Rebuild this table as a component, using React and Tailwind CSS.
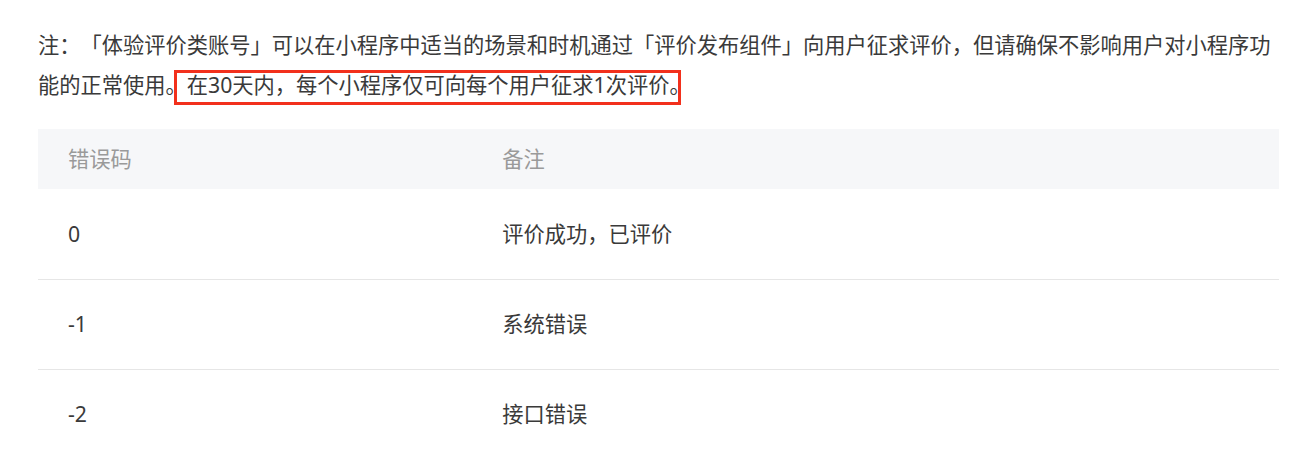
export default function App() {
  const rows = [
    ["0", "评价成功，已评价"],
    ["-1", "系统错误"],
    ["-2", "接口错误"],
  ];
  return (
    <div
      className="w-[1297px] h-[459px] overflow-hidden bg-white pl-[38px] pr-[18px] pt-[25px] text-[#3a3a3a] [text-spacing-trim:space-all]"
      style={{ fontFamily: '"Noto Sans", "Noto Sans CJK SC", sans-serif' }}
    >
      <div className="relative">
        <p className="text-[21.25px] leading-[40px] [text-spacing-trim:space-all]">
          注：「体验评价类账号」可以在小程序中适当的场景和时机通过「评价发布组件」向用户征求评价，但请确保不影响用户对小程序功能的正常使用。在30天内，每个小程序仅可向每个用户征求1次评价。
        </p>
        <div className="absolute left-[136px] top-[45px] w-[507px] h-[35px] border-[3px] border-[#f2301c] pointer-events-none" />
      </div>
      <table className="mt-[24px] w-full table-fixed border-collapse text-[21.25px]">
        <thead>
          <tr className="bg-[#f6f7f9] h-[60px]">
            <th className="w-[35%] pl-[30px] text-left font-normal text-[#9a9a9a]">错误码</th>
            <th className="pl-[30px] text-left font-normal text-[#9a9a9a]">备注</th>
          </tr>
        </thead>
        <tbody>
          {rows.map(([code, note], i) => (
            <tr key={i} className={`h-[90px] ${i < rows.length - 1 ? "border-b border-[#e6e6e6]" : ""}`}>
              <td className="pl-[30px]">{code}</td>
              <td className="pl-[30px]">{note}</td>
            </tr>
          ))}
        </tbody>
      </table>
    </div>
  );
}
